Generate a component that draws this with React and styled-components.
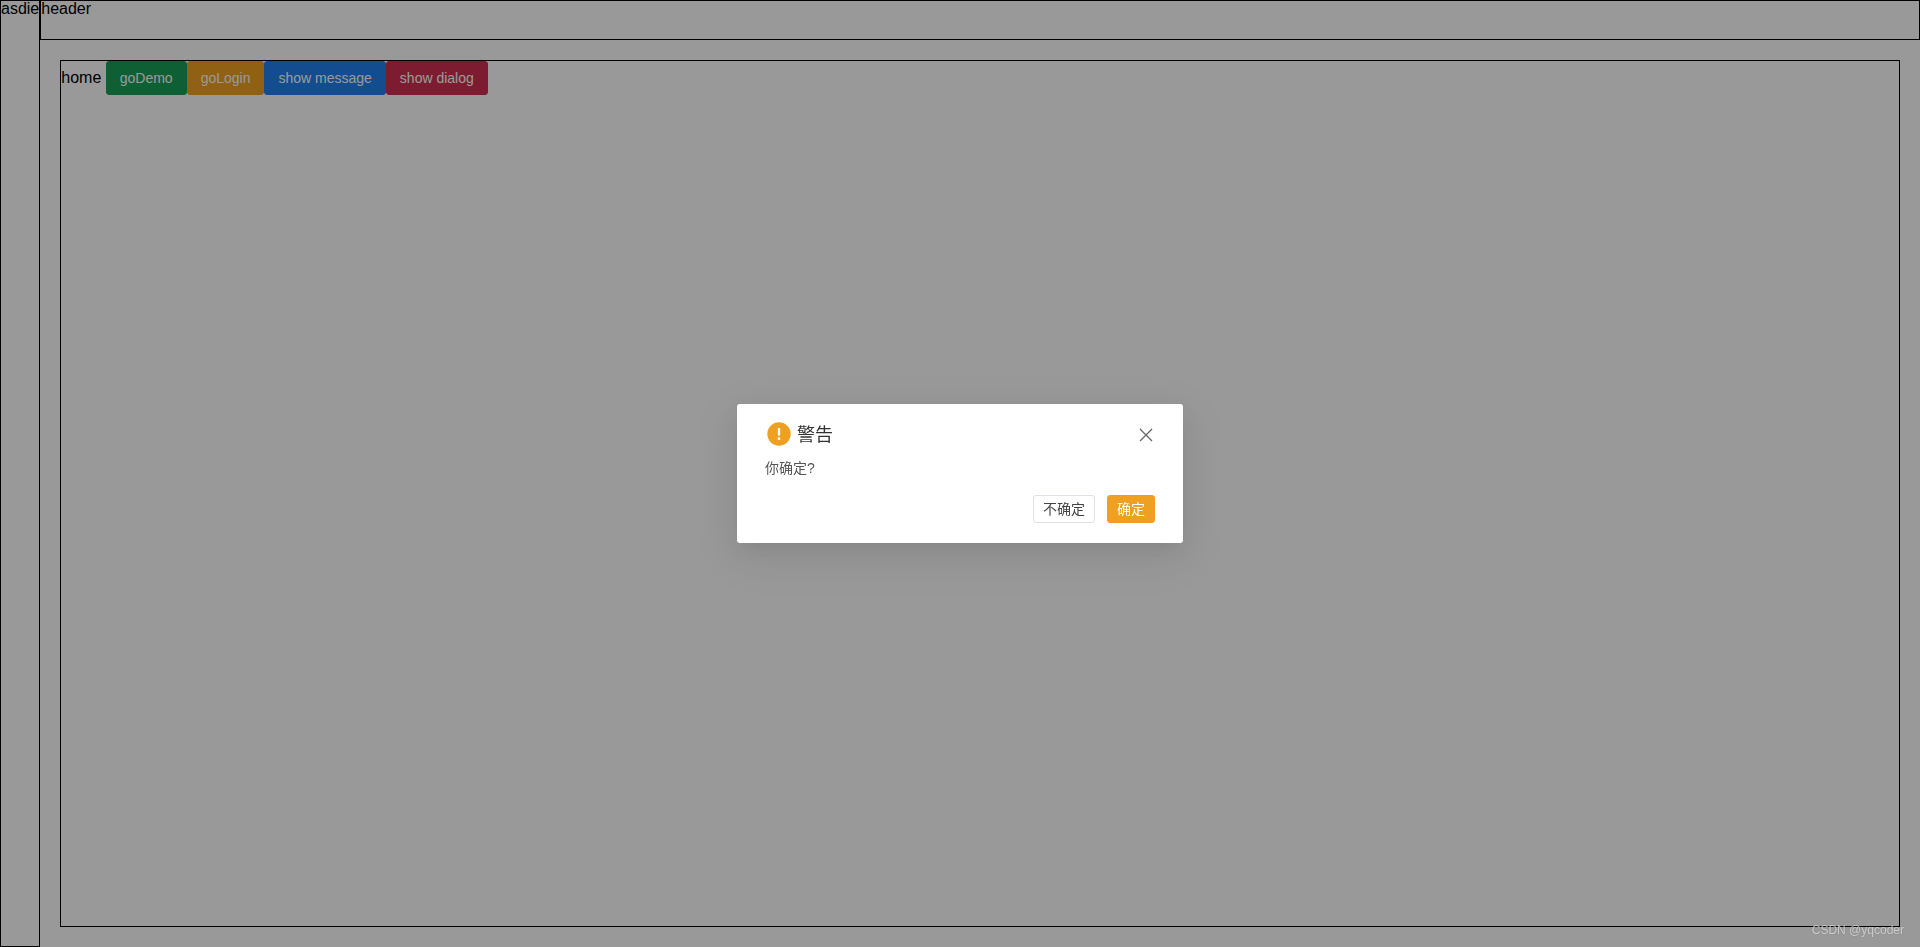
import React from "react";
import styled, { createGlobalStyle } from "styled-components";

const CJK = `"Liberation Sans", "Noto Sans CJK SC", sans-serif`;

const Global = createGlobalStyle`
  html, body { margin: 0; padding: 0; height: 100%; background: #fff; }
  body { font-family: ${CJK}; font-size: 16px; color: #000; overflow: hidden; }
  #root { height: 100%; }
  * { box-sizing: border-box; }
`;

const Shell = styled.div`
  display: flex;
  height: 947px;
`;
const Aside = styled.aside`
  flex: 0 0 40px;
  border: 1px solid #000;
  line-height: 16px;
`;
const Column = styled.div`
  flex: 1;
  display: flex;
  flex-direction: column;
  min-width: 0;
`;
const Header = styled.header`
  flex: 0 0 40px;
  border: 1px solid #000;
  line-height: 16px;
`;
const Main = styled.main`
  flex: 1;
  padding: 20px;
  display: flex;
`;
const Content = styled.div`
  flex: 1;
  border: 1px solid #000;
  display: flex;
  align-items: flex-start;
`;
const HomeLabel = styled.span`
  line-height: 34px;
  margin-right: 4.45px;
`;
const Button = styled.button`
  height: ${(p) => (p.$small ? 28 : 34)}px;
  padding: 0 ${(p) => (p.$small ? 9 : 13)}px ${(p) => (p.$small ? 2 : 0)}px;
  margin: 0;
  font-family: ${CJK};
  font-size: 14px;
  border-radius: 3px;
  border: 1px solid ${(p) => p.$border || p.$bg};
  background: ${(p) => p.$bg};
  color: ${(p) => p.$color || "#fff"};
  cursor: pointer;
`;
const Overlay = styled.div`
  position: fixed;
  inset: 0;
  background: rgba(0, 0, 0, 0.4);
  display: flex;
  align-items: center;
  justify-content: center;
`;
const Dialog = styled.div`
  width: 446px;
  height: 139px;
  padding: 16px 28px 20px;
  background: #fff;
  border-radius: 3px;
  box-shadow: 0 6px 16px -9px rgba(0, 0, 0, 0.08), 0 9px 28px 0 rgba(0, 0, 0, 0.07),
    0 12px 48px 16px rgba(0, 0, 0, 0.05);
  color: #555;
  font-size: 14px;
`;
const DialogHead = styled.div`
  display: flex;
  align-items: center;
  justify-content: space-between;
  height: 28px;
`;
const DialogTitle = styled.div`
  display: flex;
  align-items: center;
  gap: 4px;
  font-size: 18px;
  color: #333;
`;
const TitleText = styled.span`
  margin-bottom: 2px;
`;
const CloseIcon = styled.svg`
  width: 18px;
  height: 18px;
  display: block;
  margin-top: 1px;
  color: #666;
`;
const Message = styled.div`
  margin-top: 9px;
  line-height: 22px;
`;
const Actions = styled.div`
  display: flex;
  justify-content: flex-end;
  gap: 12px;
  margin-top: 16px;
`;
const Watermark = styled.div`
  position: fixed;
  right: 16px;
  bottom: 9px;
  font-size: 12px;
  line-height: 16px;
  color: rgba(255, 255, 255, 0.65);
  text-shadow: 0 0 1px rgba(0, 0, 0, 0.35);
`;

function WarningIcon() {
  return (
    <svg width="28" height="28" viewBox="0 0 24 24" aria-hidden="true">
      <circle cx="12" cy="12" r="10" fill="#f0a020" />
      <rect x="11" y="6.6" width="2" height="6.8" rx="1" fill="#fff" />
      <circle cx="12" cy="16" r="1.2" fill="#fff" />
    </svg>
  );
}

export default function App() {
  return (
    <>
      <Global />
      <Shell>
        <Aside>asdie</Aside>
        <Column>
          <Header>header</Header>
          <Main>
            <Content>
              <HomeLabel>home</HomeLabel>
              <Button $bg="#18a058">goDemo</Button>
              <Button $bg="#f0a020">goLogin</Button>
              <Button $bg="#2080f0">show message</Button>
              <Button $bg="#d03050">show dialog</Button>
            </Content>
          </Main>
        </Column>
      </Shell>
      <Overlay>
        <Dialog>
          <DialogHead>
            <DialogTitle>
              <WarningIcon />
              <TitleText>警告</TitleText>
            </DialogTitle>
            <CloseIcon viewBox="0 0 18 18" fill="none" stroke="currentColor" strokeWidth="1.3" aria-hidden="true">
              <path d="M3 3 L15 15 M15 3 L3 15" />
            </CloseIcon>
          </DialogHead>
          <Message>你确定?</Message>
          <Actions>
            <Button $small $bg="#fff" $border="#e0e0e6" $color="#444">不确定</Button>
            <Button $small $bg="#f0a020">确定</Button>
          </Actions>
        </Dialog>
      </Overlay>
      <Watermark>CSDN @yqcoder</Watermark>
    </>
  );
}
